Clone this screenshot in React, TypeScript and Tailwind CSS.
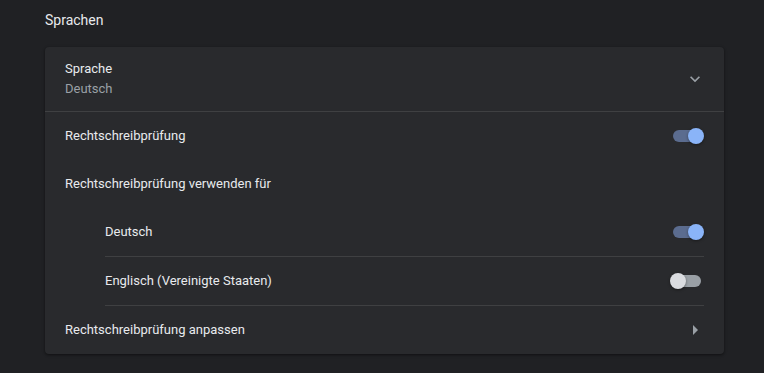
import type { ReactNode } from 'react'

function Toggle({ checked }: { checked: boolean }) {
  return (
    <div className="relative h-[16px] w-[34px] shrink-0">
      <div
        className={
          checked
            ? 'absolute left-[3px] right-[3px] top-[2px] h-[12px] rounded-full bg-[#5b6c8f]'
            : 'absolute left-[3px] right-[3px] top-[2px] h-[12px] rounded-full bg-[#9aa0a6]'
        }
      />
      <div
        className={
          checked
            ? 'absolute right-0 top-0 h-[16px] w-[16px] rounded-full bg-[#8ab4f8] shadow-[0_1px_3px_rgba(0,0,0,0.4)]'
            : 'absolute left-0 top-0 h-[16px] w-[16px] rounded-full bg-[#dadce0] shadow-[0_1px_3px_rgba(0,0,0,0.4)]'
        }
      />
    </div>
  )
}

function Row({ label, children, className = '' }: { label: string; children?: ReactNode; className?: string }) {
  return (
    <div className={`flex h-[48px] items-center justify-between ${className}`}>
      <span className="text-[#e8eaed]">{label}</span>
      {children}
    </div>
  )
}

export default function App() {
  return (
    <div
      className="min-h-screen bg-[#202124] px-[45px] text-[13px] leading-[20px]"
      style={{ fontFamily: 'Roboto, "Liberation Sans", sans-serif' }}
    >
      <div className="h-[47px] pt-[10px]">
        <h2 className="text-[14px] font-normal text-[#e8eaed]">Sprachen</h2>
      </div>

      <div className="w-[679px] rounded-[4px] bg-[#292a2d] shadow-[0_1px_2px_0_rgba(0,0,0,0.3),0_1px_3px_1px_rgba(0,0,0,0.15)]">
        <div className="flex h-[65px] items-center justify-between border-b border-[#3f4042] px-[20px]">
          <div className="flex flex-col">
            <span className="text-[#e8eaed]">Sprache</span>
            <span className="text-[#9aa0a6]">Deutsch</span>
          </div>
          <svg viewBox="0 0 24 24" className="mr-[-1px] h-[20px] w-[20px] fill-[#9aa0a6]">
            <path d="M16.59 8.59L12 13.17 7.41 8.59 6 10l6 6 6-6z" />
          </svg>
        </div>

        <Row label="Rechtschreibprüfung" className="px-[20px]">
          <Toggle checked />
        </Row>
        <Row label="Rechtschreibprüfung verwenden für" className="px-[20px]" />

        <div className="ml-[60px] mr-[20px]">
          <Row label="Deutsch" className="h-[49px] border-b border-[#3f4042]">
            <Toggle checked />
          </Row>
          <Row label="Englisch (Vereinigte Staaten)" className="h-[49px] border-b border-[#3f4042]">
            <Toggle checked={false} />
          </Row>
        </div>

        <Row label="Rechtschreibprüfung anpassen" className="px-[20px]">
          <svg viewBox="0 0 24 24" className="mr-[-3px] h-[24px] w-[24px] fill-[#9aa0a6]">
            <path d="M10 17l5-5-5-5v10z" />
          </svg>
        </Row>
      </div>
    </div>
  )
}
